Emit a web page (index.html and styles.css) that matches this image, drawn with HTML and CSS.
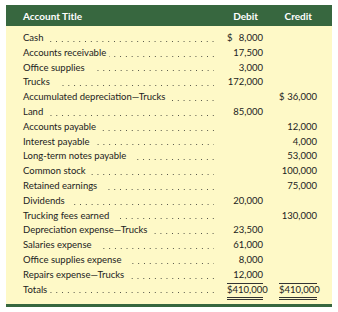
FILE: index.html
```html
<!DOCTYPE html>
<html>
<head>
<meta charset="utf-8">
<link rel="stylesheet" href="styles.css">
</head>
<body>
<div class="sheet">
  <div class="head">
    <span class="h-title">Account Title</span>
    <span class="h-dr">Debit</span>
    <span class="h-cr">Credit</span>
  </div>
  <div class="body">
    <div class="row"><span class="name">Cash</span><span class="lead"></span><span class="dr"><span class="v"><span>$</span><span class="n">8,000</span></span></span><span class="cr"><span class="v"></span></span></div>
    <div class="row"><span class="name">Accounts receivable</span><span class="lead"></span><span class="dr"><span class="v"><span class="n">17,500</span></span></span><span class="cr"><span class="v"></span></span></div>
    <div class="row"><span class="name">Office supplies</span><span class="lead wide"></span><span class="dr"><span class="v"><span class="n">3,000</span></span></span><span class="cr"><span class="v"></span></span></div>
    <div class="row"><span class="name">Trucks</span><span class="lead wide"></span><span class="dr"><span class="v"><span class="n">172,000</span></span></span><span class="cr"><span class="v"></span></span></div>
    <div class="row"><span class="name">Accumulated depreciation—Trucks</span><span class="lead"></span><span class="dr"><span class="v"></span></span><span class="cr"><span class="v"><span>$</span><span class="n">36,000</span></span></span></div>
    <div class="row"><span class="name">Land</span><span class="lead"></span><span class="dr"><span class="v"><span class="n">85,000</span></span></span><span class="cr"><span class="v"></span></span></div>
    <div class="row"><span class="name">Accounts payable</span><span class="lead"></span><span class="dr"><span class="v"></span></span><span class="cr"><span class="v"><span class="n">12,000</span></span></span></div>
    <div class="row"><span class="name">Interest payable</span><span class="lead"></span><span class="dr"><span class="v"></span></span><span class="cr"><span class="v"><span class="n">4,000</span></span></span></div>
    <div class="row"><span class="name">Long-term notes payable</span><span class="lead wide"></span><span class="dr"><span class="v"></span></span><span class="cr"><span class="v"><span class="n">53,000</span></span></span></div>
    <div class="row"><span class="name">Common stock</span><span class="lead"></span><span class="dr"><span class="v"></span></span><span class="cr"><span class="v"><span class="n">100,000</span></span></span></div>
    <div class="row"><span class="name">Retained earnings</span><span class="lead wide"></span><span class="dr"><span class="v"></span></span><span class="cr"><span class="v"><span class="n">75,000</span></span></span></div>
    <div class="row"><span class="name">Dividends</span><span class="lead mid"></span><span class="dr"><span class="v"><span class="n">20,000</span></span></span><span class="cr"><span class="v"></span></span></div>
    <div class="row"><span class="name">Trucking fees earned</span><span class="lead wide"></span><span class="dr"><span class="v"></span></span><span class="cr"><span class="v"><span class="n">130,000</span></span></span></div>
    <div class="row"><span class="name">Depreciation expense—Trucks</span><span class="lead"></span><span class="dr"><span class="v"><span class="n">23,500</span></span></span><span class="cr"><span class="v"></span></span></div>
    <div class="row"><span class="name">Salaries expense</span><span class="lead wide"></span><span class="dr"><span class="v"><span class="n">61,000</span></span></span><span class="cr"><span class="v"></span></span></div>
    <div class="row"><span class="name">Office supplies expense</span><span class="lead mid"></span><span class="dr"><span class="v"><span class="n">8,000</span></span></span><span class="cr"><span class="v"></span></span></div>
    <div class="row"><span class="name">Repairs expense—Trucks</span><span class="lead"></span><span class="dr"><span class="v single"><span class="n">12,000</span></span></span><span class="cr"><span class="v single"></span></span></div>
    <div class="row"><span class="name">Totals</span><span class="lead"></span><span class="dr"><span class="v double"><span class="n">$410,000</span></span></span><span class="cr"><span class="v double"><span class="n">$410,000</span></span></span></div>
  </div>
</div>
</body>
</html>
```
FILE: styles.css
```css
html, body {
  margin: 0;
  padding: 0;
  background: #ffffff;
}
body {
  padding: 5px 6px 0 6px;
  font-family: Lato, "Open Sans", sans-serif;
  color: #222222;
}
.sheet {
  width: 326px;
  border-bottom: 3px solid #37673f;
}
.head {
  display: flex;
  align-items: center;
  height: 21px;
  background: #37673f;
  color: #ffffff;
  font-weight: 700;
  font-size: 10px;
  padding: 0 15px 0 17px;
}
.h-title {
  width: 191px;
}
.h-dr {
  width: 44px;
  text-align: right;
  padding-right: 5px;
}
.h-cr {
  width: 49px;
  text-align: right;
  padding-right: 5px;
}
.body {
  background: #fef9c7;
  padding: 5px 15px 6.5px 17px;
  font-size: 9.5px;
}
.row {
  display: flex;
  height: 14.8px;
  line-height: 14.8px;
}
.name {
  white-space: nowrap;
}
.lead {
  flex: 1;
  margin-left: 3px;
  background-image: linear-gradient(to right, transparent 0, transparent 4.6px, #555548 4.6px, #555548 5.8px);
  background-size: 5.8px 1px;
  background-repeat: repeat-x;
  background-position: right 0 bottom 4px;
}
.lead.wide {
  margin-left: 10px;
}
.lead.mid {
  margin-left: 6px;
}
.dr, .cr {
  display: flex;
}
.dr {
  width: 36px;
  padding-left: 13px;
}
.cr {
  width: 38px;
  padding-left: 16px;
}
.v {
  display: flex;
  width: 100%;
  height: 14.8px;
  white-space: nowrap;
}
.v .n {
  margin-left: auto;
}
.v.single {
  border-bottom: 1px solid #333333;
}
.v.double {
  border-bottom: 3px double #333333;
}
```
